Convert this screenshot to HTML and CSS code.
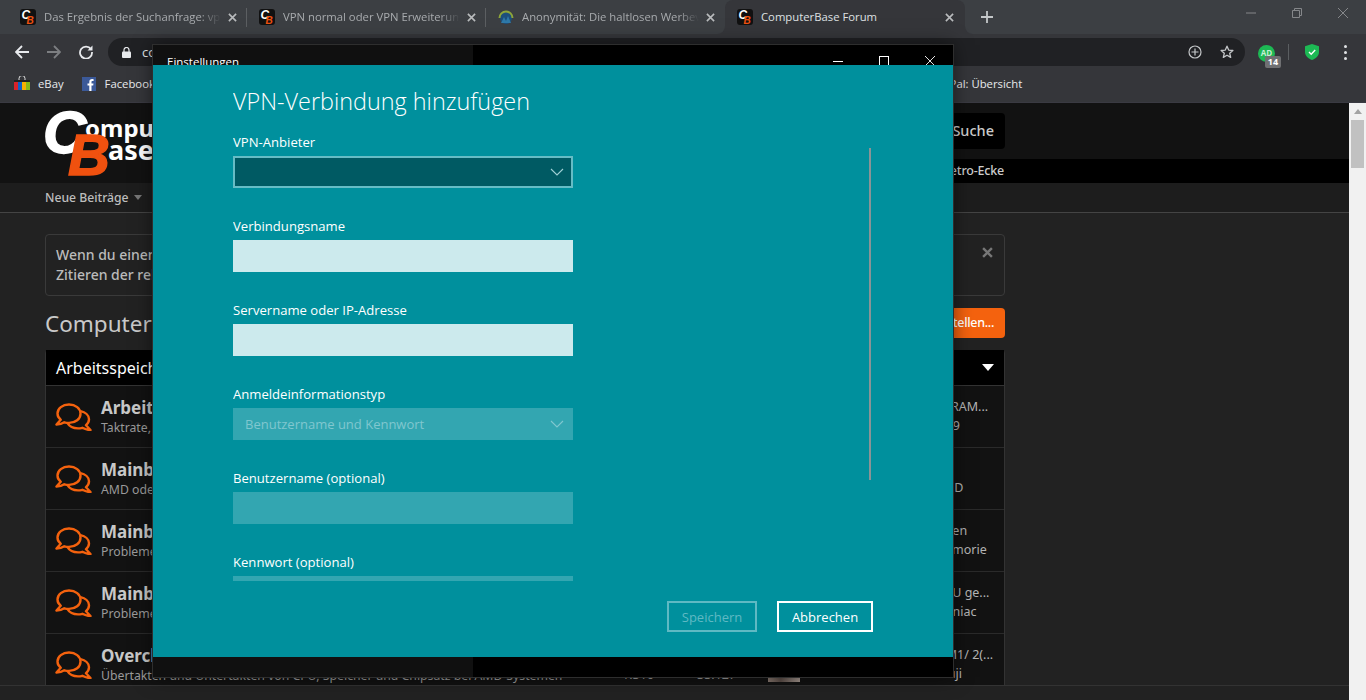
FILE: index.html
```html
<!DOCTYPE html>
<html lang="de">
<head>
<meta charset="utf-8">
<title>ComputerBase Forum</title>
<link rel="stylesheet" href="styles.css">
</head>
<body>
<svg class="defs" width="0" height="0" aria-hidden="true">
  <symbol id="cb" viewBox="0 0 16 16">
    <rect width="16" height="16" rx="3" fill="#111"/>
    <text x="1.5" y="10" class="fav-c">C</text>
    <text x="6.5" y="14.5" class="fav-b">B</text>
  </symbol>
  <symbol id="chat" viewBox="0 0 37 28">
    <path d="M14 1.5C7.5 1.5 2.5 5.5 2.5 10.5c0 2.5 1.2 4.6 3.2 6.2L1.5 21.5c3.2 0 6-.9 7.8-2.2 1.5.4 3 .6 4.7.6 6.5 0 11.5-4 11.5-9.2S20.500 1.500 14 1.500z" fill="none" stroke="#f4620e" stroke-width="2.400" stroke-linejoin="round"/>
    <path d="M25.500 8.200c4.800 1.100 8.500 4.200 8.500 8.100 0 2.400-1.200 4.400-3 5.900l4.500 4.800c-3.400 0-6-1-8.200-2.200-1.400.4-2.800.6-4.300.6-4.600 0-8.500-1.800-10.500-5.200" fill="none" stroke="#f4620e" stroke-width="2.400" stroke-linejoin="round"/>
  </symbol>
  <symbol id="tabx" viewBox="0 0 10 10">
    <path d="M1 1l8 8M9 1L1 9" fill="none" stroke="currentColor" stroke-width="1.800"/>
  </symbol>
  <symbol id="chev" viewBox="0 0 14 8">
    <path d="M1 1l6 6 6-6" fill="none" stroke="currentColor" stroke-width="1.100"/>
  </symbol>
</svg>

<header class="chrome">
  <div class="tabstrip">
    <div class="tab tab-first">
      <svg class="fav"><use href="#cb"/></svg>
      <span class="tab-title">Das Ergebnis der Suchanfrage: vpn normal</span>
      <svg class="tab-x"><use href="#tabx"/></svg>
    </div>
    <div class="tab">
      <svg class="fav"><use href="#cb"/></svg>
      <span class="tab-title">VPN normal oder VPN Erweiterung nutzen</span>
      <svg class="tab-x"><use href="#tabx"/></svg>
    </div>
    <div class="tab tab-last">
      <svg class="fav" viewBox="0 0 16 16">
        <circle cx="8" cy="9" r="6" fill="#1d4f7c"/>
        <path d="M1.500 9A6.500 6.500 0 0 1 14.500 9" fill="none" stroke="#8da53a" stroke-width="2"/>
        <path d="M3 14l3-6 2 4 2-5 3 7z" fill="#2f79a8"/>
      </svg>
      <span class="tab-title">Anonymität: Die haltlosen Werbeversprechen</span>
      <svg class="tab-x"><use href="#tabx"/></svg>
    </div>
    <div class="tab tab-active">
      <svg class="fav"><use href="#cb"/></svg>
      <span class="tab-title">ComputerBase Forum</span>
      <svg class="tab-x"><use href="#tabx"/></svg>
    </div>
    <div class="strip-rest">
      <svg class="newtab" viewBox="0 0 12 12"><path d="M6 0v12M0 6h12" stroke="#c4c7c9" stroke-width="1.800"/></svg>
      <div class="winctl">
        <svg viewBox="0 0 10 10"><path d="M0 5h10" stroke="#85878a"/></svg>
        <svg viewBox="0 0 10 10"><path d="M.5 2.500h7v7h-7zM2.500 2.500v-2h7v7h-2" fill="none" stroke="#85878a"/></svg>
        <svg viewBox="0 0 10 10"><path d="M0 0l10 10M10 0L0 10" stroke="#85878a"/></svg>
      </div>
    </div>
  </div>

  <div class="toolbar">
    <svg class="nav-ic" viewBox="0 0 14 14"><path d="M14 7H1.500M7 1L1 7l6 6" fill="none" stroke="#e8eaed" stroke-width="1.800"/></svg>
    <svg class="nav-ic" viewBox="0 0 14 14"><path d="M0 7h12.500M7 1l6 6-6 6" fill="none" stroke="#7c7e81" stroke-width="1.800"/></svg>
    <svg class="nav-ic" viewBox="0 0 14 14"><path d="M12 4.200A6 6 0 1 0 13 7" fill="none" stroke="#e8eaed" stroke-width="1.800"/><path d="M13.500 .5v5h-5z" fill="#e8eaed"/></svg>
    <div class="omnibox">
      <svg class="lock" viewBox="0 0 9 11"><path d="M2 5V3a2.500 2.500 0 0 1 5 0v2" fill="none" stroke="#e8eaed" stroke-width="1.200"/><rect y="4.500" width="9" height="6.500" rx="1" fill="#e8eaed"/></svg>
      <span class="url">computerbase.de/forum/</span>
      <svg class="omni-ic" viewBox="0 0 14 14"><circle cx="7" cy="7" r="6" fill="none" stroke="#c4c7c9" stroke-width="1.200"/><path d="M7 3.500v7M3.500 7h7" stroke="#c4c7c9" stroke-width="1.200"/></svg>
      <svg class="omni-ic" viewBox="0 0 14 14"><path d="M7 1.200l1.700 3.900 4.200.4-3.200 2.800 1 4.100L7 10.200l-3.700 2.200 1-4.100L1.100 5.500l4.200-.4z" fill="none" stroke="#c4c7c9" stroke-width="1.300" stroke-linejoin="round"/></svg>
    </div>
    <div class="ext-ad">
      <span class="ad-dot">AD</span>
      <span class="ad-count">14</span>
    </div>
    <span class="ext-sep"></span>
    <svg class="shield" viewBox="0 0 14 16"><path d="M7 0l7 2.200V8c0 4-3.500 6.800-7 8-3.500-1.200-7-4-7-8V2.200z" fill="#1db954"/><path d="M4 8l2.200 2.200L10.200 6" fill="none" stroke="#fff" stroke-width="1.400"/></svg>
    <span class="dots"><i></i><i></i><i></i></span>
  </div>

  <div class="bookmarks">
    <span class="bm bm-ebay">
      <svg class="bm-ic" viewBox="0 0 16 16"><path d="M5 4V2.500a3 3 0 0 1 6 0V4" fill="none" stroke="#ddd"/><rect y="4" width="16" height="2" fill="#222"/><rect y="6" width="4" height="8" fill="#d8232a"/><rect x="4" y="6" width="4" height="8" fill="#0f5fc4"/><rect x="8" y="6" width="4" height="8" fill="#f5af02"/><rect x="12" y="6" width="4" height="8" fill="#86b817"/></svg>
      eBay
    </span>
    <span class="bm bm-fb">
      <svg class="bm-ic bm-ic-sm" viewBox="0 0 14 14"><rect width="14" height="14" fill="#3b5998"/><path d="M9.500 14V8.500h1.700l.3-2.100h-2V5.100c0-.6.200-1 1-1h1.100V2.200c-.2 0-.8-.1-1.600-.1-1.600 0-2.700 1-2.700 2.800v1.500H5.500v2.100h1.800V14z" fill="#fff"/></svg>
      Facebook
    </span>
    <span class="bm bm-paypal">PayPal: Übersicht</span>
  </div>
</header>

<div class="viewport">
  <div class="site">
    <div class="site-head">
      <svg class="logo" viewBox="0 0 110 72" width="110" height="72">
        <text x="-2" y="45" class="logo-c">C</text>
        <text x="40" y="29" class="logo-t">ompu</text>
        <text x="63" y="52" class="logo-a">ase</text>
        <text x="23" y="67" class="logo-b">B</text>
      </svg>
      <div class="head-top"><span class="search">Suche</span></div>
      <div class="head-strip"><span>Retro-Ecke</span></div>
    </div>
    <nav class="site-nav">
      <span>Neue Beiträge</span><i class="caret"></i>
    </nav>
    <main class="content">
      <div class="notice">
        <p>Wenn du einen Beitrag mit der Mehrfach-Funktion<br>Zitieren der relevanten Stellen nutzen möchtest</p>
        <svg class="notice-x" viewBox="0 0 10 10"><path d="M1 1l8 8M9 1L1 9" stroke="#777" stroke-width="2.200"/></svg>
      </div>
      <div class="title-row">
        <h1>ComputerBase Forum</h1>
        <span class="cta">Thema erstellen...</span>
      </div>
      <section class="board">
        <div class="board-head"><span>Arbeitsspeicher und Mainboards</span><i class="board-caret"></i></div>

        <article class="row">
          <svg class="chat"><use href="#chat"/></svg>
          <div class="r-main"><h2>Arbeitsspeicher</h2><p>Taktrate, Timings und Kompatibilität</p></div>
          <span class="r-stat">1.204</span><span class="r-stat">15.377</span><span class="avatar"></span>
          <div class="r-last"><span>Zadak Vengeance DDR4 RAM...</span><span>Heute um 11:31 · Rocky79</span></div>
        </article>
        <article class="row">
          <svg class="chat"><use href="#chat"/></svg>
          <div class="r-main"><h2>Mainboards: AMD</h2><p>AMD oder Intel, welches Mainboard</p></div>
          <span class="r-stat">2.210</span><span class="r-stat">30.128</span><span class="avatar"></span>
          <div class="r-last"><span>X570 BIOS Update</span><span>Heute um 11:02 · Robert D</span></div>
        </article>
        <article class="row">
          <svg class="chat"><use href="#chat"/></svg>
          <div class="r-main"><h2>Mainboards: Intel</h2><p>Probleme und Fragen zu Intel</p></div>
          <span class="r-stat">3.541</span><span class="r-stat">41.906</span><span class="avatar"></span>
          <div class="r-last"><span>Z390 Probleme beim Lesen</span><span>Heute um 10:47 · Big Memorie</span></div>
        </article>
        <article class="row">
          <svg class="chat"><use href="#chat"/></svg>
          <div class="r-main"><h2>Mainboards: Sonstige</h2><p>Probleme und Fragen zu weiteren</p></div>
          <span class="r-stat">1.822</span><span class="r-stat">19.260</span><span class="avatar"></span>
          <div class="r-last"><span>CPU auf altem Board: CPU ge...</span><span>Heute um 10:12 · Ed Zwyniac</span></div>
        </article>
        <article class="row">
          <svg class="chat"><use href="#chat"/></svg>
          <div class="r-main"><h2>Overclocking: AMD</h2><p>Übertakten und Untertakten von CPU, Speicher und Chipsatz bei AMD-Systemen</p></div>
          <span class="r-stat">1.316</span><span class="r-stat">33.127</span><span class="avatar"></span>
          <div class="r-last"><span>AMD Ryzen 3600, B450 M1/ 2(...</span><span>Heute um 11:44 · Herr Fuji</span></div>
        </article>
      </section>
    </main>
    <footer class="bottom-bar"></footer>
  </div>
  <aside class="page-scroll">
    <i class="ps-arrow"></i>
    <i class="ps-thumb"></i>
  </aside>
</div>

<div class="window">
  <div class="win-title">
    <span>Einstellungen</span>
    <div class="win-btns">
      <svg viewBox="0 0 10 10"><path d="M0 5.500h10" stroke="#fff"/></svg>
      <svg viewBox="0 0 10 10"><rect x=".5" y=".5" width="9" height="9" fill="none" stroke="#fff"/></svg>
      <svg viewBox="0 0 10 10"><path d="M0 0l10 10M10 0L0 10" stroke="#fff" stroke-width=".9"/></svg>
    </div>
  </div>
  <div class="win-body">
    <div class="form">
      <h1>VPN-Verbindung hinzufügen</h1>
      <label>VPN-Anbieter</label>
      <div class="field select"><svg class="chev"><use href="#chev"/></svg></div>
      <label>Verbindungsname</label>
      <div class="field input"></div>
      <label>Servername oder IP-Adresse</label>
      <div class="field input"></div>
      <label>Anmeldeinformationstyp</label>
      <div class="field disabled"><span>Benutzername und Kennwort</span><svg class="chev"><use href="#chev"/></svg></div>
      <label>Benutzername (optional)</label>
      <div class="field disabled"></div>
      <label>Kennwort (optional)</label>
      <div class="field disabled"></div>
    </div>
    <i class="win-scroll"></i>
    <div class="win-actions">
      <span class="btn btn-off">Speichern</span>
      <span class="btn btn-on">Abbrechen</span>
    </div>
  </div>
  <div class="win-foot"></div>
</div>
</body>
</html>
```

FILE: styles.css
```css
* { box-sizing: border-box; }
html, body { margin: 0; padding: 0; }
body {
  width: 1366px;
  height: 700px;
  overflow: hidden;
  background: #222;
  font-family: "Noto Sans", sans-serif;
  position: relative;
}
.defs { display: none; }
i { display: block; }
h1, h2, p { margin: 0; }

/* browser chrome */
.chrome { height: 103px; background: #35363a; font-family: "Open Sans", sans-serif; }
.tabstrip {
  height: 34px;
  background: linear-gradient(#3c3f43 50%, #35363a 50%);
  display: flex;
  align-items: stretch;
}
.tab {
  width: 239px;
  display: flex;
  align-items: center;
  padding: 0 10px 0 12px;
  color: #a8abae;
  background: #3c3f43;
  position: relative;
}
.tab::after {
  content: "";
  position: absolute;
  right: 0;
  top: 8px;
  width: 1px;
  height: 19px;
  background: #5c5f62;
}
.tab-first { width: 247px; padding-left: 20px; }
.tab-last { border-radius: 0 0 8px 0; }
.tab-last::after, .tab-active::after { display: none; }
.fav { width: 16px; height: 16px; flex: none; margin-right: 8px; }
.fav-c { font: italic bold 12px "Liberation Sans", sans-serif; fill: #fff; }
.fav-b { font: italic bold 10px "Liberation Sans", sans-serif; fill: #f0510f; }
.tab-title {
  flex: 1;
  white-space: nowrap;
  overflow: hidden;
  font-size: 11.3px;
  line-height: 16px;
  -webkit-mask-image: linear-gradient(90deg, #000 88%, transparent);
  mask-image: linear-gradient(90deg, #000 88%, transparent);
}
.tab-x { width: 9px; height: 9px; flex: none; margin-left: 7px; color: #b9bbbd; }
.tab-active {
  width: 240px;
  background: #35363a;
  color: #dfe1e3;
  padding: 0 11px 0 12px;
  border-radius: 8px 8px 0 0;
}
.tab-active .tab-title { -webkit-mask-image: none; mask-image: none; }
.strip-rest {
  flex: 1;
  background: #3c3f43;
  border-radius: 0 0 0 8px;
  display: flex;
  align-items: center;
  padding-left: 16px;
}
.newtab { width: 12px; height: 12px; }
.winctl {
  margin-left: auto;
  display: flex;
  gap: 36px;
  padding: 0 18px 8px 0;
}
.winctl svg { width: 10px; height: 10px; }

.toolbar { height: 34px; display: flex; align-items: center; padding: 2px 13px 0 15px; }
.nav-ic { width: 14px; height: 14px; margin-right: 18px; flex: none; }
.omnibox {
  margin-left: -3px;
  width: 1137px;
  height: 28px;
  border-radius: 14px;
  background: #202124;
  display: flex;
  align-items: center;
  padding: 0 11px 0 14px;
  flex: none;
}
.lock { width: 9px; height: 11px; margin-right: 11px; }
.url { color: #e8eaed; font-size: 13px; flex: 1; }
.omni-ic { width: 14px; height: 14px; margin-left: 18px; }
.ext-ad { position: relative; width: 25px; height: 24px; margin-left: 10px; flex: none; align-self: flex-start; margin-top: 7px; }
.ad-dot {
  display: block;
  width: 17px;
  height: 17px;
  margin: 2px 0 0 3px;
  border-radius: 50%;
  background: #1db954;
  color: #c5efd3;
  font-size: 8px;
  font-weight: 700;
  line-height: 16px;
  text-align: center;
}
.ad-count {
  position: absolute;
  left: 10px;
  top: 13px;
  width: 16px;
  height: 12px;
  background: #6f7072;
  border-radius: 2px;
  color: #fff;
  font-size: 9px;
  font-weight: 700;
  line-height: 12px;
  text-align: center;
}
.ext-sep { width: 1px; height: 16px; background: #5b5e61; margin: 0 16px 0 8px; flex: none; }
.shield { width: 14px; height: 16px; flex: none; }
.dots { display: flex; flex-direction: column; gap: 3px; margin-left: 25px; }
.dots i { width: 3px; height: 3px; border-radius: 50%; background: #e0e2e4; }

.bookmarks {
  height: 35px;
  display: flex;
  align-items: center;
  color: #e8eaed;
  font-size: 11.3px;
  padding: 0 0 3px 14px;
  border-bottom: 1px solid #3a3a42;
}
.bm { display: flex; align-items: center; gap: 8px; white-space: nowrap; }
.bm-ic { width: 16px; height: 16px; }
.bm-ic-sm { width: 14px; height: 14px; margin-right: 1px; }
.bm-fb { margin-left: 18px; }
.bm-paypal { margin-left: 776px; }

/* site */
.viewport { display: flex; height: 597px; }
.site { width: 1349px; display: flex; flex-direction: column; min-height: 0; }
.site-head {
  height: 80px;
  flex: none;
  background: #121212;
  display: grid;
  grid-template-columns: 200px 1fr;
  grid-template-rows: 56px 24px;
}
.logo { grid-row: 1 / 3; margin: 5px 0 0 45px; overflow: visible; }
.logo-c { font: italic bold 60px "Liberation Sans", sans-serif; fill: #fff; stroke: #fff; stroke-width: 1.500px; }
.logo-t { font: bold 24px "Noto Sans", sans-serif; fill: #fff; }
.logo-a { font: bold 27px "Noto Sans", sans-serif; fill: #fff; }
.logo-b { font: italic bold 58px "Liberation Sans", sans-serif; fill: #f0510f; stroke: #f0510f; stroke-width: 1.500px; }
.head-top { display: flex; justify-content: flex-end; padding: 10px 344px 0 0; }
.search {
  width: 100px;
  height: 36px;
  background: #000;
  border-radius: 4px;
  color: #ccc;
  font-size: 14.5px;
  font-weight: 500;
  line-height: 35px;
  text-align: right;
  padding-right: 11px;
}
.head-strip {
  background: #000;
  color: #ccc;
  font-size: 12.5px;
  font-weight: 500;
  letter-spacing: -.2px;
  line-height: 24px;
  text-align: right;
  padding-right: 345px;
}
.site-nav {
  height: 30px;
  flex: none;
  background: #1d1d1d;
  border-bottom: 1px solid #444;
  padding: 0 0 1px 45px;
  display: flex;
  align-items: center;
  color: #bdbdbd;
  font-size: 12.2px;
  font-weight: 500;
}
.caret {
  margin: 1px 0 0 5px;
  border: 4px solid transparent;
  border-top: 5px solid #777;
  border-bottom: 0;
}
.content {
  flex: 1;
  min-height: 0;
  overflow: hidden;
  padding: 21px 344px 0 45px;
}
.notice {
  height: 62px;
  border: 1px solid #3a3a3a;
  border-radius: 4px;
  padding: 10px;
  position: relative;
  color: #bbb;
  font-size: 14px;
  font-weight: 500;
  line-height: 20px;
  white-space: nowrap;
}
.notice-x { position: absolute; right: 11px; top: 12px; width: 11px; height: 11px; }
.title-row { display: flex; justify-content: space-between; margin-top: 12px; height: 30px; }
.title-row h1 { font-size: 22.5px; font-weight: 400; color: #c9c9c9; line-height: 31px; white-space: nowrap; }
.cta {
  background: #f4620e;
  color: #fff;
  font-size: 12.5px;
  font-weight: 500;
  letter-spacing: -.3px;
  line-height: 29px;
  padding: 0 11px;
  border-radius: 4px;
}
.board { margin-top: 12px; border: 1px solid #333; border-top: none; border-radius: 4px 4px 0 0; }
.board-head {
  height: 36px;
  background: #000;
  color: #fff;
  font-size: 16px;
  display: flex;
  align-items: center;
  justify-content: space-between;
  padding: 0 10px;
  border-bottom: 1px solid #333;
}
.board-caret { border: 6px solid transparent; border-top: 7px solid #fff; border-bottom: 0; }
.row {
  height: 62px;
  background: #121212;
  border-bottom: 1px solid #2a2a2a;
  display: grid;
  grid-template-columns: 55px 521px 75px 71px 40px 1fr;
  align-items: start;
}
.chat { width: 37px; height: 28px; margin: 17px 0 0 9px; }
.r-main { padding-top: 11px; white-space: nowrap; }
.r-main h2 { font-size: 17px; font-weight: 700; color: #c8c8c8; line-height: 22px; }
.r-main p { font-size: 12.25px; color: #9a9a9a; line-height: 18px; }
.r-stat { font-size: 12.5px; color: #9a9a9a; padding-top: 32px; }
.avatar { width: 32px; height: 32px; margin-top: 16px; background: linear-gradient(90deg, #8b7b72, #5d4f49 40%, #a89a92); }
.r-last {
  display: flex;
  flex-direction: column;
  padding-top: 12px;
  color: #b4b4b4;
  font-size: 12.5px;
  line-height: 18.5px;
  white-space: nowrap;
}
.bottom-bar { height: 15px; flex: none; background: #222; border-top: 1px solid #333; }

.page-scroll { width: 17px; background: #f1f1f1; position: relative; padding: 17px 2px 0; }
.ps-arrow {
  position: absolute;
  top: 6px;
  left: 5px;
  border: 4px solid transparent;
  border-top: 0;
  border-bottom: 5px solid #a3a3a3;
}
.ps-thumb { height: 48px; background: #c1c1c1; }

/* settings window */
.window {
  position: absolute;
  left: 153px;
  top: 45px;
  width: 800px;
  height: 632px;
  display: flex;
  flex-direction: column;
  color: #fff;
  font-family: "Open Sans", sans-serif;
  background: linear-gradient(90deg, #101010 320px, #000 320px);
  box-shadow: 0 0 0 1px #2e2e2e, 0 0 18px rgba(0, 0, 0, .55);
}
.win-title {
  height: 20px;
  flex: none;
  display: flex;
  justify-content: space-between;
  padding-left: 14px;
  font-size: 11.5px;
  line-height: 33px;
}
.win-title span { display: block; height: 26px; }
.win-btns { display: flex; gap: 36px; padding: 11px 18px 0 0; }
.win-btns svg { width: 10px; height: 10px; }
.win-body { height: 592px; flex: none; background: #00909d; position: relative; z-index: 1; }
.form { width: 340px; margin-left: 80px; height: 516px; overflow: hidden; }
.form h1 { font-size: 23.4px; font-weight: 300; line-height: 32px; padding-top: 20px; height: 67px; white-space: nowrap; }
.form label { display: block; font-size: 13.1px; line-height: 20px; height: 24px; }
.field { height: 32px; margin-bottom: 28px; display: flex; align-items: center; justify-content: space-between; padding: 0 9px 0 12px; }
.select { background: #005a63; border: 2px solid #66bcc5; padding-left: 10px; padding-right: 7px; color: #a0d0d5; justify-content: flex-end; }
.input { background: #cceaed; }
.disabled { background: #33a6b1; color: #80c7cf; font-size: 13px; }
.chev { width: 14px; height: 8px; margin-left: auto; }
.win-scroll { position: absolute; left: 716px; top: 83px; width: 2px; height: 332px; background: #8a9496; }
.win-actions { position: absolute; right: 80px; top: 536px; display: flex; gap: 20px; }
.btn { height: 31px; border: 2px solid; display: block; font-size: 13px; line-height: 28px; text-align: center; }
.btn-off { width: 90px; border-color: #5fb9c3; color: #5fb9c3; }
.btn-on { width: 96px; border-color: #fff; color: #fff; }
.win-foot { flex: 1; }
```
